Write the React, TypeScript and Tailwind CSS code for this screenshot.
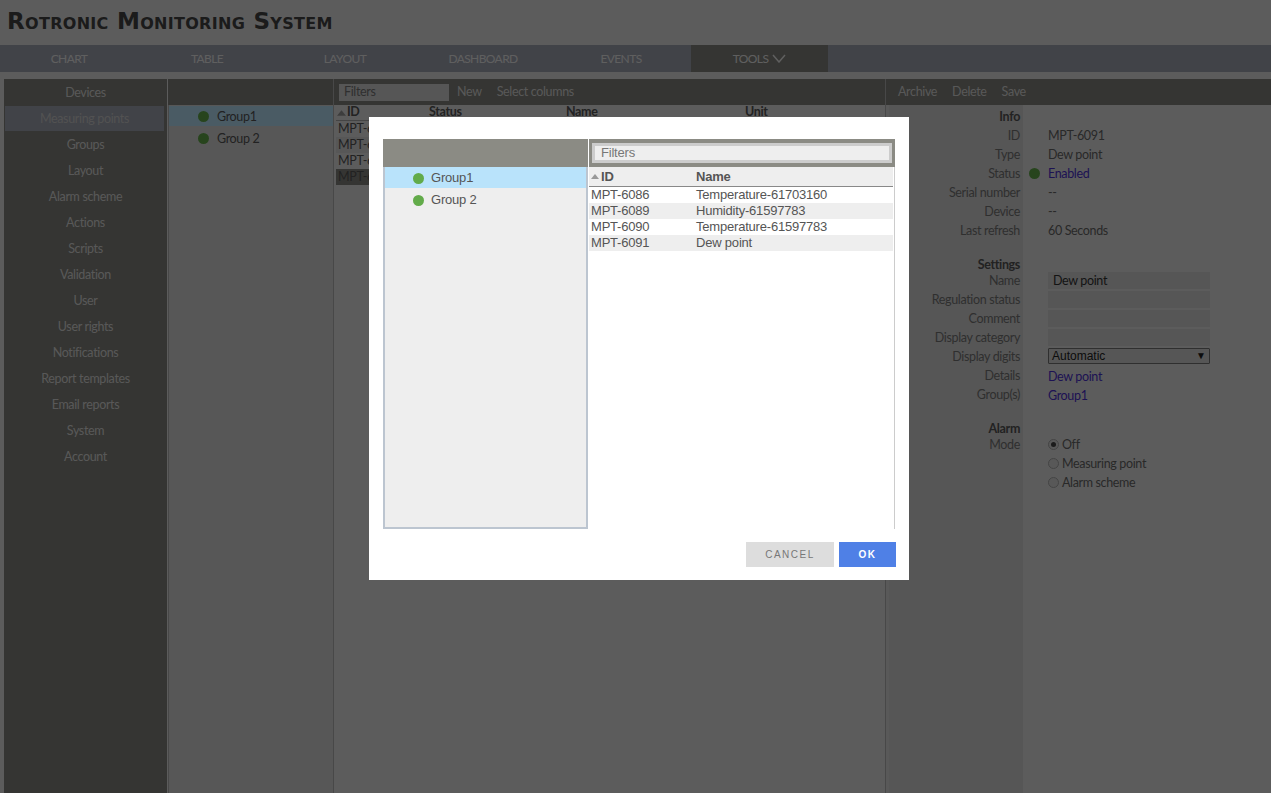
const sidebarItems = [
  'Devices',
  'Measuring points',
  'Groups',
  'Layout',
  'Alarm scheme',
  'Actions',
  'Scripts',
  'Validation',
  'User',
  'User rights',
  'Notifications',
  'Report templates',
  'Email reports',
  'System',
  'Account',
];

const tabs = ['CHART', 'TABLE', 'LAYOUT', 'DASHBOARD', 'EVENTS'];

const pointRows = [
  { id: 'MPT-6086', name: 'Temperature-61703160' },
  { id: 'MPT-6089', name: 'Humidity-61597783' },
  { id: 'MPT-6090', name: 'Temperature-61597783' },
  { id: 'MPT-6091', name: 'Dew point' },
];

const infoRows = [
  { label: 'ID', value: 'MPT-6091' },
  { label: 'Type', value: 'Dew point' },
  { label: 'Status', value: 'Enabled', link: true, dot: true },
  { label: 'Serial number', value: '--' },
  { label: 'Device', value: '--' },
  { label: 'Last refresh', value: '60 Seconds' },
];

function Dot({ className = '' }: { className?: string }) {
  return <span className={`block h-[11px] w-[11px] rounded-full bg-[#62ab4a] ${className}`} />;
}

function SortUp({ big = false }: { big?: boolean }) {
  return (
    <svg width={big ? 9 : 8} height={big ? 6 : 5} viewBox="0 0 8 5" className="shrink-0">
      <path d="M4 0 L8 5 L0 5 Z" fill="#999" />
    </svg>
  );
}

function Label({ children, bold = false }: { children?: React.ReactNode; bold?: boolean }) {
  return <div className={`h-[19px] pr-[3px] text-right leading-[19px] ${bold ? 'font-bold text-[#555]' : ''}`}>{children}</div>;
}

function Radio({ label, checked = false }: { label: string; checked?: boolean }) {
  return (
    <div className="flex h-[19px] items-center gap-[3px]">
      <span className="mb-[2px] flex h-[11px] w-[11px] items-center justify-center rounded-full border border-[#aaa] bg-[#ddd]">
        {checked && <span className="h-[5px] w-[5px] rounded-full bg-[#444]" />}
      </span>
      <span>{label}</span>
    </div>
  );
}

function FieldBox({ children }: { children?: React.ReactNode }) {
  return <div className="mb-[2px] h-[17px] w-[162px] bg-[#d6d6d6] pl-[5px] leading-[17px] text-[#333]">{children}</div>;
}

export default function App() {
  return (
    <div className="relative flex h-[793px] w-[1271px] flex-col overflow-hidden bg-[#e6e6e6] font-['Lato',sans-serif] text-[12.5px] tracking-[-0.35px] text-[#777]">
      <header className="h-[45px] shrink-0 pl-[7px] pt-[7px] font-['DejaVu_Sans',sans-serif] text-[23px] leading-[28px] font-bold tracking-[0.3px] text-[#444] [font-variant:small-caps]">
        Rotronic Monitoring System
      </header>

      <nav className="flex h-[27px] shrink-0 bg-[#a3a7b5] text-[12px] tracking-[-0.6px] text-[#eee]">
        {tabs.map((tab) => (
          <div key={tab} className="flex w-[138px] items-center justify-center">
            {tab}
          </div>
        ))}
        <div className="ml-px flex w-[137px] items-center justify-center gap-[4px] bg-[#85857f]">
          TOOLS
          <svg width="14" height="9" viewBox="0 0 14 9" fill="none" stroke="#eee" strokeWidth="1.5">
            <path d="M1 1 L7 8 L13 1" />
          </svg>
        </div>
      </nav>

      <main className="mt-[7px] flex min-h-0 flex-1 pl-[4px]">
        <aside className="w-[163px] shrink-0 bg-[#85857f] pt-px text-center text-[#ddd]">
          {sidebarItems.map((item) => (
            <div key={item} className="flex h-[26px] items-start justify-center">
              <div
                className={`flex h-[25px] items-center justify-center pt-[2px] ${item === 'Measuring points' ? 'w-[159px] -translate-x-px bg-[#a3a7b5] text-[#ccc]' : ''}`}
              >
                {item}
              </div>
            </div>
          ))}
        </aside>

        <section className="ml-px flex w-[166px] shrink-0 flex-col border-r border-[#b5b5b5]">
          <div className="h-[26px] shrink-0 bg-[#85857f]" />
          <div className="flex-1 border-l border-[#b5b5b5] bg-[#dadada] pt-px">
            <div className="flex h-[20px] items-center gap-[8px] bg-[#b9e3fb] pl-[29px] text-[#555]">
              <Dot />
              <span className="mt-[2px]">Group1</span>
            </div>
            <div className="mt-[2px] flex h-[20px] items-center gap-[8px] pl-[29px] text-[#555]">
              <Dot />
              <span className="mt-[2px]">Group 2</span>
            </div>
          </div>
        </section>

        <section className="flex w-[552px] shrink-0 flex-col border-r border-[#b5b5b5]">
          <div className="flex h-[26px] shrink-0 items-center gap-[8px] bg-[#85857f] pl-[5px] text-[#ddd]">
            <div className="mt-px flex h-[17px] w-[110px] items-center bg-[#d6d6d6] pl-[5px] text-[#777]">Filters</div>
            <span>New</span>
            <span className="ml-[7px]">Select columns</span>
          </div>
          <div className="flex-1 pl-[2px] text-[#555]">
            <div className="flex h-[16px] items-center border-b border-[#aaa] font-bold">
              <div className="flex w-[93px] items-center gap-px pl-px">
                <SortUp big />
                ID
              </div>
              <div className="w-[137px]">Status</div>
              <div className="w-[179px]">Name</div>
              <div>Unit</div>
            </div>
            {pointRows.map((row, i) => (
              <div key={row.id} className={`h-[16px] pl-[2px] leading-[16px] ${i === 3 ? 'bg-[#85857f]' : i % 2 ? 'bg-[#d9d9d9]' : ''}`}>
                {row.id}
              </div>
            ))}
          </div>
        </section>

        <section className="flex min-w-0 flex-1 flex-col">
          <div className="flex h-[26px] shrink-0 items-center gap-[15px] bg-[#85857f] pl-[12px] text-[#ddd]">
            <span>Archive</span>
            <span>Delete</span>
            <span>Save</span>
          </div>
          <div className="flex flex-1 bg-[#dedede] pl-[3px]">
            <div className="w-[134px] shrink-0 bg-[#d6d6d6] pt-[2px]">
              <Label bold>Info</Label>
              {infoRows.map((row) => (
                <Label key={row.label}>{row.label}</Label>
              ))}
              <div className="h-[15px]" />
              <Label bold>Settings</Label>
              <div className="-mt-[3px]">
                {['Name', 'Regulation status', 'Comment', 'Display category', 'Display digits', 'Details', 'Group(s)'].map((l) => (
                  <Label key={l}>{l}</Label>
                ))}
              </div>
              <div className="h-[15px]" />
              <Label bold>Alarm</Label>
              <div className="-mt-[3px]">
                <Label>Mode</Label>
              </div>
            </div>
            <div className="flex-1 bg-[#e6e6e6] pl-[25px] pt-[2px] text-[#666]">
              <div className="h-[19px]" />
              {infoRows.map((row) => (
                <div key={row.label} className="relative h-[19px] leading-[19px]">
                  {row.dot && <Dot className="absolute -left-[19px] top-[4px]" />}
                  <span className={row.link ? 'text-[#4a2fd0]' : ''}>{row.value}</span>
                </div>
              ))}
              <div className="h-[32px]" />
              <FieldBox>Dew point</FieldBox>
              <FieldBox />
              <FieldBox />
              <FieldBox />
              <div className="flex h-[16px] w-[162px] items-center justify-between rounded-[1px] border border-[#777] bg-[#d6d6d6] px-[3px] font-['Liberation_Sans',sans-serif] text-[12px] tracking-normal text-[#222]">
                Automatic
                <span className="text-[10px] leading-none">▼</span>
              </div>
              <div className="mt-[3px] h-[19px] leading-[19px] text-[#4a2fd0]">Dew point</div>
              <div className="h-[19px] leading-[19px] text-[#4a2fd0]">Group1</div>
              <div className="h-[31px]" />
              <Radio label="Off" checked />
              <Radio label="Measuring point" />
              <Radio label="Alarm scheme" />
            </div>
          </div>
        </section>
      </main>

      <div className="absolute inset-0 bg-black/60" />

      <div className="absolute left-[369px] top-[117px] flex h-[463px] w-[540px] flex-col bg-white px-[14px] pt-[22px] font-['Liberation_Sans',sans-serif] text-[13px] tracking-[-0.2px] text-[#555]">
        <div className="flex h-[390px] gap-px">
          <div className="flex w-[205px] shrink-0 flex-col">
            <div className="h-[28px] shrink-0 bg-[#8b8b84]" />
            <div className="flex-1 border-x-2 border-b-2 border-[#bcc5d0] bg-[#eee]">
              <div className="flex h-[21px] items-center gap-[7px] bg-[#b9e3fb] pl-[28px] pt-px">
                <Dot />
                Group1
              </div>
              <div className="mt-px flex h-[22px] items-center gap-[7px] pl-[28px]">
                <Dot />
                Group 2
              </div>
            </div>
          </div>
          <div className="flex w-[306px] flex-col">
            <div className="h-[28px] shrink-0 bg-[#8b8b84] px-[3px] pt-[4px]">
              <div className="h-[20px] border-[3px] border-[#ccc] bg-[#eee] pl-[6px] leading-[13px] text-[#777]">Filters</div>
            </div>
            <div className="flex-1 border-r border-[#ccc] pr-px">
              <div className="flex h-[20px] items-center border-b border-[#888] bg-[#eee] font-bold">
                <div className="flex w-[107px] items-center gap-[2px] pl-[2px]">
                  <SortUp />
                  ID
                </div>
                <div>Name</div>
              </div>
              {pointRows.map((row, i) => (
                <div key={row.id} className={`flex h-[16px] items-center ${i % 2 ? 'bg-[#eee]' : ''}`}>
                  <div className="w-[107px] pl-[2px]">{row.id}</div>
                  <div>{row.name}</div>
                </div>
              ))}
            </div>
          </div>
        </div>
        <div className="mt-[13px] flex justify-end gap-[5px] text-[10px] tracking-[1.5px]">
          <button className="h-[25px] w-[88px] bg-[#ddd] text-[#777]">CANCEL</button>
          <button className="-mr-px h-[25px] w-[57px] bg-[#4f80e6] font-bold text-white">OK</button>
        </div>
      </div>
    </div>
  );
}
